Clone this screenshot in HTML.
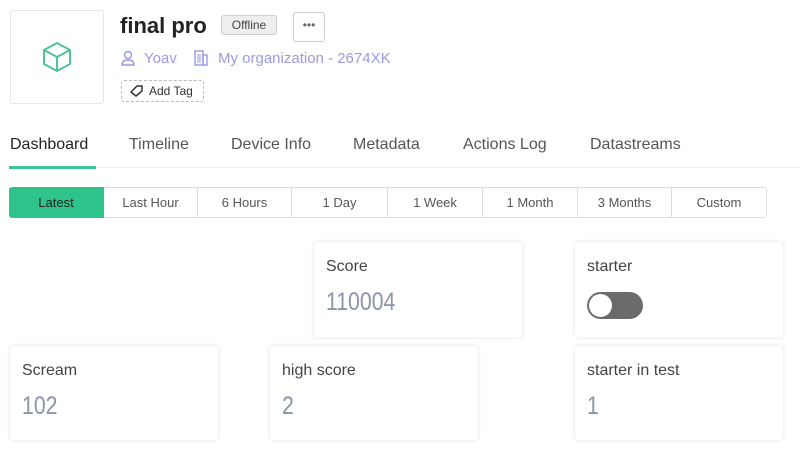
<!DOCTYPE html>
<html><head><style>
*{box-sizing:border-box;margin:0;padding:0}
body{width:800px;height:450px;background:#fff;font-family:"Liberation Sans",sans-serif;position:relative;overflow:hidden;color:#333}
.abs{position:absolute}
.card{position:absolute;background:#fff;border-radius:4px;box-shadow:0 0 5px rgba(0,0,0,0.12)}
.card .t{position:absolute;left:12px;top:16px;font-size:16px;color:#444}
.card .v{position:absolute;left:12px;top:46px;font-size:25px;color:#8b93a8;font-weight:300;transform:scaleX(0.85);transform-origin:left}
.tab{position:absolute;top:136px;font-size:16px;color:#555}
.seg{position:absolute;top:187px;height:31px;border:1px solid #ddd;border-left:none;font-size:13px;color:#555;display:flex;align-items:center;justify-content:center}
</style></head><body>
<div class="abs" style="left:10px;top:10px;width:94px;height:94px;border:1px solid #e6e6e6;border-radius:3px"></div>
<svg class="abs" style="left:40px;top:40px" width="34" height="34" viewBox="0 0 34 34"><path d="M17 3 L30 10 L30 24 L17 31 L4 24 L4 10 Z M4 10 L17 17 L30 10 M17 17 L17 31" fill="none" stroke="#4fc394" stroke-width="2" stroke-linejoin="round"/></svg>
<div class="abs" style="left:120px;top:13px;font-size:22px;font-weight:bold;color:#222">final pro</div>
<div class="abs" style="left:221px;top:15px;width:56px;height:20px;background:#eee;border:1px solid #ccc;border-radius:3px;font-size:12px;text-align:center;line-height:18px;color:#444">Offline</div>
<div class="abs" style="left:293px;top:12px;width:32px;height:30px;border:1px solid #ccc;border-radius:3px;text-align:center;line-height:24px;font-size:12px;color:#666">•••</div>
<svg class="abs" style="left:120px;top:50px" width="16" height="16" viewBox="0 0 16 16"><circle cx="8" cy="5" r="3.5" fill="none" stroke="#9a9ae0" stroke-width="1.4"/><path d="M2 15 Q2 10 8 10 Q14 10 14 15 Z" fill="none" stroke="#9a9ae0" stroke-width="1.4"/></svg>
<div class="abs" style="left:144px;top:50px;font-size:15px;color:#9a9ae0">Yoav</div>
<svg class="abs" style="left:194px;top:50px" width="14" height="16" viewBox="0 0 14 16"><rect x="1" y="1" width="8" height="14" fill="none" stroke="#9a9ae0" stroke-width="1.4"/><rect x="9" y="5" width="4" height="10" fill="none" stroke="#9a9ae0" stroke-width="1.4"/><path d="M4 4v9M6 4v9" stroke="#9a9ae0"/></svg>
<div class="abs" style="left:218px;top:50px;font-size:15px;color:#9a9ae0">My organization - 2674XK</div>
<div class="abs" style="left:121px;top:80px;width:83px;height:22px;border:1px dashed #bbb;border-radius:3px;font-size:12px;line-height:20px;padding-left:27px;color:#333">Add Tag</div>
<svg class="abs" style="left:130px;top:85px" width="14" height="12" viewBox="0 0 14 12"><path d="M1 7 L7 1 L12 1 L12 6 L6 11 Z" fill="none" stroke="#333" stroke-width="1.5" stroke-linejoin="round"/></svg>
<div class="tab" style="left:10px;color:#222">Dashboard</div>
<div class="tab" style="left:129px">Timeline</div>
<div class="tab" style="left:231px">Device Info</div>
<div class="tab" style="left:353px">Metadata</div>
<div class="tab" style="left:463px">Actions Log</div>
<div class="tab" style="left:590px">Datastreams</div>
<div class="abs" style="left:9px;top:167px;width:791px;height:1px;background:#eee"></div>
<div class="abs" style="left:9px;top:166px;width:87px;height:3px;background:#3cc596"></div>
<div class="seg" style="left:9px;width:95px;background:#2ec38a;border-color:#2ec38a;color:#222;border-radius:3px 0 0 3px">Latest</div>
<div class="seg" style="left:104px;width:94px">Last Hour</div>
<div class="seg" style="left:198px;width:94px">6 Hours</div>
<div class="seg" style="left:292px;width:96px">1 Day</div>
<div class="seg" style="left:388px;width:95px">1 Week</div>
<div class="seg" style="left:483px;width:95px">1 Month</div>
<div class="seg" style="left:578px;width:94px">3 Months</div>
<div class="seg" style="left:672px;width:95px;border-radius:0 3px 3px 0">Custom</div>
<div class="card" style="left:314px;top:242px;width:208px;height:95px"><div class="t">Score</div><div class="v">110004</div></div>
<div class="card" style="left:575px;top:242px;width:208px;height:95px"><div class="t">starter</div>
<div class="abs" style="left:12px;top:50px;width:56px;height:27px;border-radius:14px;background:#6b6b6b"><div class="abs" style="left:2px;top:2px;width:23px;height:23px;border-radius:50%;background:#fff"></div></div></div>
<div class="card" style="left:10px;top:346px;width:208px;height:94px"><div class="t">Scream</div><div class="v">102</div></div>
<div class="card" style="left:270px;top:346px;width:208px;height:94px"><div class="t">high score</div><div class="v">2</div></div>
<div class="card" style="left:575px;top:346px;width:208px;height:94px"><div class="t">starter in test</div><div class="v">1</div></div>
</body></html>
